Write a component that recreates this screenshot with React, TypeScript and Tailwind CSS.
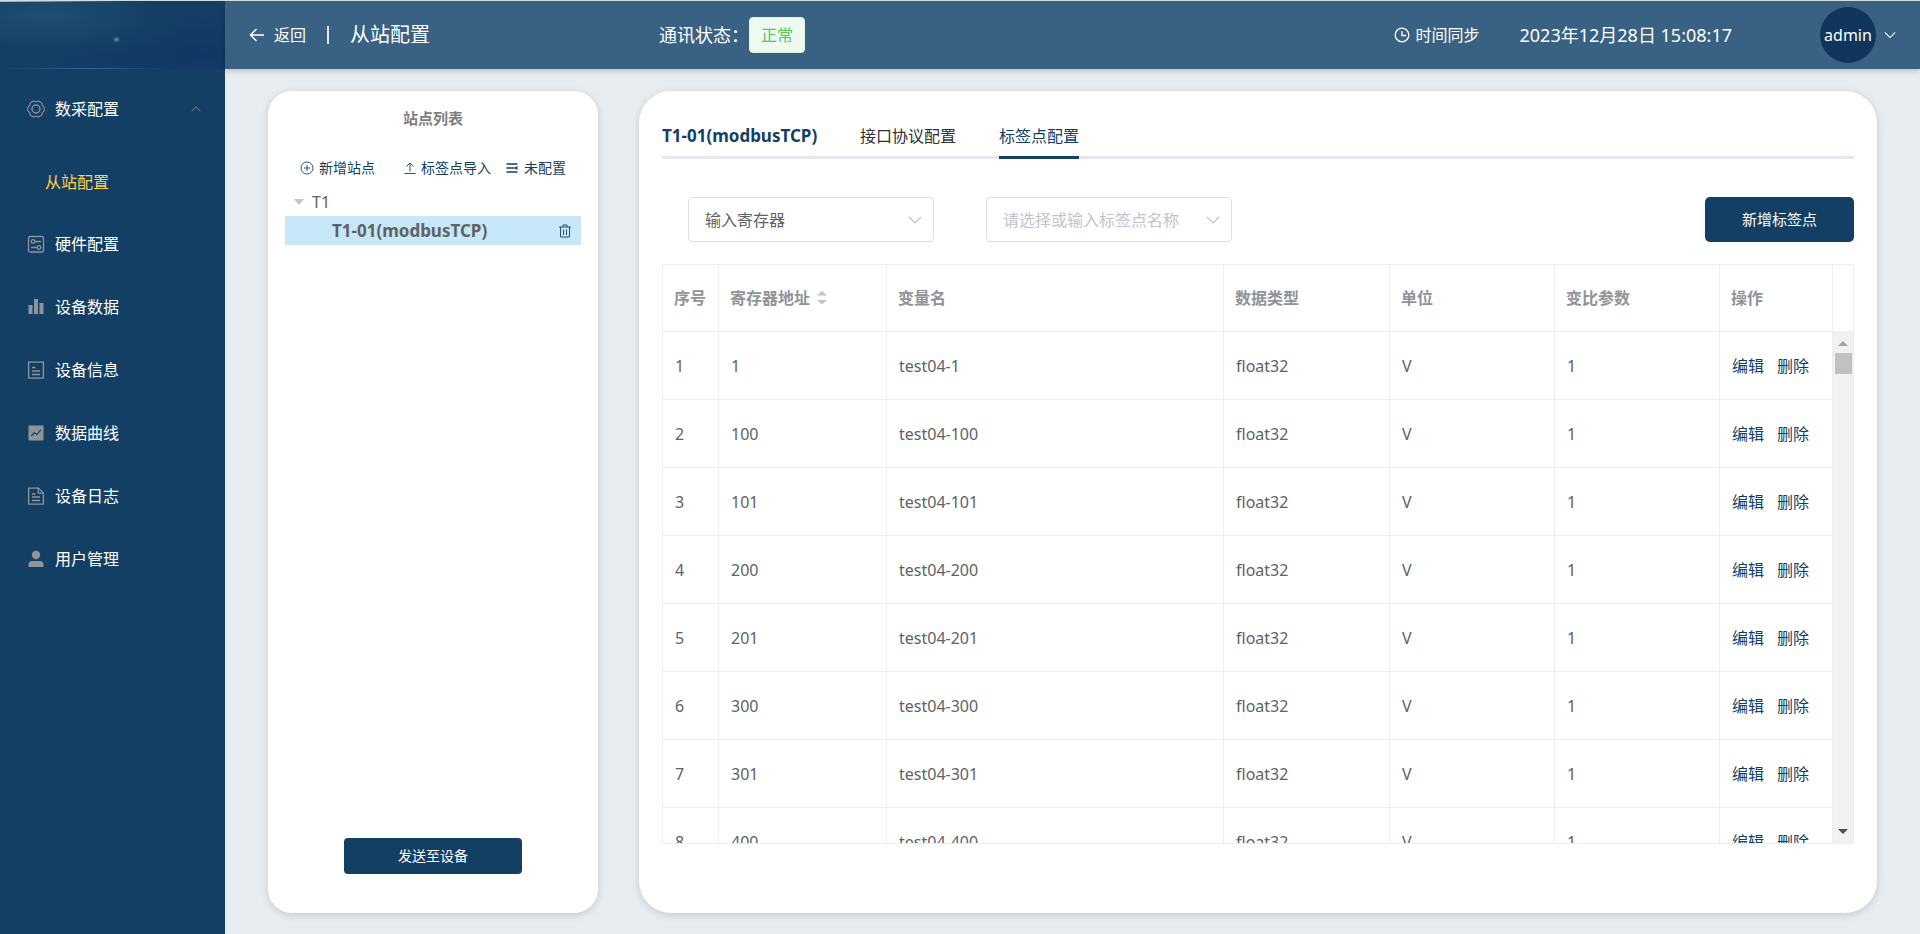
import { useState } from "react";
import type { ReactNode } from "react";

const menu = [
  { name: "硬件配置", icon: "hardware" },
  { name: "设备数据", icon: "bars" },
  { name: "设备信息", icon: "tickets" },
  { name: "数据曲线", icon: "curve" },
  { name: "设备日志", icon: "log" },
  { name: "用户管理", icon: "user" },
];

const rows = [1, 100, 101, 200, 201, 300, 301, 400].map((address, i) => ({
  no: i + 1,
  address,
  name: `test04-${address}`,
  type: "float32",
  unit: "V",
  ratio: 1,
}));

const glyphs: Record<string, ReactNode> = {
  gear: (
    <g fill="none" stroke="currentColor" strokeWidth="1.1" strokeLinejoin="round">
      <path d="M17.2 10.9L15.2 12.6 14.7 15.1 11.5 17 9 16.2 6.5 17 3.3 15.1 2.8 12.6.8 10.9V7.1L2.8 5.4 3.3 2.9 6.5 1 9 1.8 11.500 1 14.700 2.900 15.200 5.400 17.200 7.100z" />
      <circle cx="9" cy="9" r="4" strokeWidth="1.4" />
    </g>
  ),
  hardware: (
    <g fill="none" stroke="currentColor" strokeWidth="1.3">
      <rect x="1.5" y="1.5" width="15" height="15.500" rx="1.500" />
      <circle cx="6" cy="6.500" r="1.800" />
      <path d="M7.800 6.500H14M4 12.500h6.200" />
      <circle cx="12" cy="12.500" r="1.800" />
    </g>
  ),
  bars: (
    <g fill="currentColor">
      <rect x="1.5" y="7" width="4" height="9" />
      <rect x="7" y="1" width="4" height="15" />
      <rect x="12.5" y="5" width="4" height="11" />
    </g>
  ),
  tickets: (
    <g fill="none" stroke="currentColor" strokeWidth="1.3">
      <rect x="1.6" y="1.1" width="14.8" height="16" />
      <path d="M5 6.500h3.500M5 10h8M5 13.500h8" />
    </g>
  ),
  curve: (
    <g>
      <rect x="1.5" y="1.5" width="15" height="15" fill="currentColor" />
      <path d="M4.300 12l3-3.200 2.600 1.700 4-4.800" fill="none" stroke="#143f65" strokeWidth="1.1" />
    </g>
  ),
  log: (
    <g fill="none" stroke="currentColor" strokeWidth="1.3">
      <path d="M1.600 1.100h10l4.800 4.800v11.200H1.600z" />
      <path d="M11.300 1.100v5h5M5 7h3.500M5 10h8M5 13.500h8" />
    </g>
  ),
  user: (
    <g fill="currentColor">
      <circle cx="9" cy="5" r="4.2" />
      <path d="M1.500 17v-2.500a3.500 3.500 0 0 1 3.500-3.500h8a3.500 3.500 0 0 1 3.500 3.500V17z" />
    </g>
  ),
};

function MenuIcon({ name }: { name: string }) {
  return (
    <svg viewBox="0 0 18 18" className="size-[18px] shrink-0 text-[#909399]" aria-hidden>
      {glyphs[name]}
    </svg>
  );
}

function Chevron({ className }: { className: string }) {
  return (
    <svg viewBox="0 0 14 8" className={className} fill="none" stroke="currentColor" strokeWidth="1.2" aria-hidden>
      <path d="M1 1l6 6 6-6" />
    </svg>
  );
}

function Sidebar() {
  return (
    <aside className="w-[225px] shrink-0 bg-[#143f65] text-base text-white">
      <div className="flex h-[77px] flex-col">
        <div className="h-px bg-[#d6dcd8]" />
        <div className="h-px bg-linear-to-r from-[#a9c4cc] to-[#143f65] to-55%" />
        <div className="relative h-[66px] bg-[radial-gradient(ellipse_at_20%_20%,#1e4f70,#143f65_45%,transparent_60%),radial-gradient(ellipse_at_90%_80%,#0f3763,#143f65_60%)]">
          <span className="absolute left-[114px] top-[36px] h-[3px] w-[5px] rounded-full bg-[#6f9dbf] blur-[1px]" />
        </div>
        <div className="h-px bg-linear-to-r from-[#143f65] via-[#2f6a96] via-40% to-[#123a64] to-75%" />
      </div>
      <nav aria-label="主菜单">
        <button type="button" aria-expanded="true" className="flex h-[63px] w-full items-center pl-[27px] pr-6">
          <MenuIcon name="gear" />
          <span className="ml-[10px]">数采配置</span>
          <Chevron className="ml-auto h-[6px] w-[10px] rotate-180 text-[#909399]" />
        </button>
        <div className="pt-3">
          <a href="#station" aria-current="page" className="flex h-[60px] items-center pl-[45px] text-[#ffd04b]">
            从站配置
          </a>
        </div>
        {menu.map((item) => (
          <a key={item.name} href={`#${item.icon}`} className="flex h-[63px] items-center gap-[10px] pl-[27px]">
            <MenuIcon name={item.icon} />
            {item.name}
          </a>
        ))}
      </nav>
    </aside>
  );
}

function Header() {
  return (
    <header className="relative flex h-[69px] shrink-0 items-center border-t border-[#d6dcd8] bg-[#386184] pl-6 pr-6 text-base text-white shadow-[0_2px_6px_rgba(0,0,0,0.2)]">
      <button type="button" className="flex items-center gap-[9px]">
        <svg viewBox="0 0 16 16" className="size-4" fill="none" stroke="currentColor" strokeWidth="1.5" aria-hidden>
          <path d="M7.500 2L1.500 8l6 6M1.500 8H15" />
        </svg>
        返回
      </button>
      <span className="ml-[21px] h-[18px] w-[2px] bg-[#dfe6ec]" />
      <h1 className="ml-[21px] text-xl">从站配置</h1>
      <div className="ml-[229px] flex items-center text-lg">
        通讯状态：
        <span className="flex h-9 w-14 items-center justify-center rounded border border-[#e1f3d8] bg-[#eef9f0] text-base text-[#4ccb5f]">
          正常
        </span>
      </div>
      <button type="button" className="ml-auto flex items-center gap-[6px]">
        <svg viewBox="0 0 16 16" className="size-4" fill="none" stroke="currentColor" strokeWidth="1.3" aria-hidden>
          <circle cx="8" cy="8" r="6.8" />
          <path d="M8 4v4.500h4" />
        </svg>
        时间同步
      </button>
      <time className="ml-10 text-lg">2023年12月28日 15:08:17</time>
      <button type="button" className="ml-[88px] flex items-center gap-2">
        <span className="flex size-14 items-center justify-center rounded-full bg-[#11365d]">admin</span>
        <Chevron className="h-2 w-3" />
      </button>
    </header>
  );
}

function StationPanel() {
  return (
    <section className="flex w-[330px] shrink-0 flex-col items-center rounded-3xl bg-white px-[17px] shadow-[0_2px_8px_rgba(0,0,0,0.15)]">
      <h2 className="mt-4 text-[15px] leading-[22px] font-bold text-[#7f7f7f]">站点列表</h2>
      <div className="mt-7 flex h-[22px] w-full items-center pl-[15px] text-sm text-[#143f65]">
        <button type="button" className="flex items-center gap-[5px]">
          <svg viewBox="0 0 14 14" className="size-[14px]" fill="none" stroke="currentColor" strokeWidth="0.9" aria-hidden>
            <circle cx="7" cy="7" r="6" />
            <path d="M7 4v6M4 7h6" />
          </svg>
          新增站点
        </button>
        <button type="button" className="ml-7 flex items-center gap-1">
          <svg viewBox="0 0 14 14" className="size-[14px]" fill="none" stroke="currentColor" strokeWidth="0.9" aria-hidden>
            <path d="M7 10.500V2M3.500 5.500L7 2l3.500 3.500M1.500 12.500h11" />
          </svg>
          标签点导入
        </button>
        <button type="button" className="ml-[14px] flex items-center gap-[5px]">
          <svg viewBox="0 0 14 14" className="size-[14px]" fill="none" stroke="currentColor" strokeWidth="1.4" aria-hidden>
            <path d="M1.500 3h11M1.500 7h8M1.500 11h11" />
            <path d="M12.500 5v4L9 7z" fill="currentColor" stroke="none" />
          </svg>
          未配置
        </button>
      </div>
      <ul role="tree" className="mt-2 w-full text-base text-[#606266]">
        <li role="treeitem" aria-expanded="true" aria-selected="false">
          <div className="flex h-[29px] items-center gap-2 pl-[9px]">
            <svg viewBox="0 0 10 6" className="h-[6px] w-[10px] text-[#c0c4cc]" aria-hidden>
              <path d="M0 0h10L5 6z" fill="currentColor" />
            </svg>
            T1
          </div>
          <ul role="group">
            <li
              role="treeitem"
              aria-selected="true"
              className="flex h-[29px] items-center justify-between bg-[#c6e8f8] pl-[47px] pr-[9px] text-[17px] font-bold"
            >
              T1-01(modbusTCP)
              <button type="button" aria-label="删除站点" className="text-[#143f65]">
                <svg viewBox="0 0 14 14" className="size-[14px]" fill="none" stroke="currentColor" strokeWidth="0.9" aria-hidden>
                  <path d="M1 3h12M5 3V1h4v2M2.500 3v10h9V3M5.500 5.500V11M8.500 5.500V11" />
                </svg>
              </button>
            </li>
          </ul>
        </li>
      </ul>
      <button type="button" className="mt-auto mb-[39px] h-9 w-[178px] rounded bg-[#143f65] text-sm text-white">
        发送至设备
      </button>
    </section>
  );
}

function Filters() {
  const [point, setPoint] = useState("");

  return (
    <div className="mt-[38px] flex items-center pl-[26px]">
      <div className="relative">
        <select
          aria-label="寄存器类型"
          className="h-[45px] w-[246px] appearance-none rounded border border-[#dcdfe6] bg-white px-4 text-base text-[#606266]"
        >
          <option>输入寄存器</option>
          <option>保持寄存器</option>
        </select>
        <Chevron className="pointer-events-none absolute right-3 top-[19px] h-2 w-[14px] text-[#c0c4cc]" />
      </div>
      <div className="relative ml-[52px]">
        <input
          aria-label="标签点名称"
          value={point}
          onChange={(e) => setPoint(e.target.value)}
          placeholder="请选择或输入标签点名称"
          className="h-[45px] w-[246px] rounded border border-[#dcdfe6] bg-white px-4 text-base text-[#606266] placeholder:text-[#c0c4cc]"
        />
        <Chevron className="pointer-events-none absolute right-3 top-[19px] h-2 w-[14px] text-[#c0c4cc]" />
      </div>
      <button type="button" className="ml-auto h-[45px] w-[149px] rounded-[5px] bg-[#143f65] text-[15px] text-white">
        新增标签点
      </button>
    </div>
  );
}

function Scrollbar() {
  return (
    <div className="flex w-[21px] shrink-0 flex-col border-l border-[#ebeef5]" aria-hidden>
      <div className="h-[67px] border-b border-[#ebeef5]" />
      <div className="flex flex-1 flex-col items-center bg-[#f1f1f1] pb-[9px] pt-[9px]">
        <svg viewBox="0 0 10 5" className="h-[5px] w-[10px]">
          <path d="M0 5h10L5 0z" fill="#a3a3a3" />
        </svg>
        <div className="mt-[7px] h-[21px] w-[17px] bg-[#c1c1c1]" />
        <svg viewBox="0 0 10 5" className="mt-auto h-[5px] w-[10px]">
          <path d="M0 0h10L5 5z" fill="#505050" />
        </svg>
      </div>
    </div>
  );
}

function TagTable() {
  return (
    <div className="mt-[22px] flex h-[580px] overflow-hidden border border-[#ebeef5]">
      <div className="min-w-0 flex-1 overflow-hidden">
        <table className="w-full table-fixed border-separate border-spacing-0 text-left text-base text-[#606266] [&_td]:border-b [&_td]:border-r [&_td]:border-[#ebeef5] [&_td]:pl-3 [&_td:last-child]:border-r-0 [&_th]:border-b [&_th]:border-r [&_th]:border-[#ebeef5] [&_th]:pl-[11px] [&_th:last-child]:border-r-0">
          <colgroup>
            <col className="w-14" />
            <col className="w-[168px]" />
            <col />
            <col className="w-[166px]" />
            <col className="w-[165px]" />
            <col className="w-[165px]" />
            <col className="w-[112px]" />
          </colgroup>
          <thead className="text-[#909399]">
            <tr className="h-[67px]">
              <th>序号</th>
              <th>
                <button type="button" className="flex items-center gap-[7px] font-bold">
                  寄存器地址
                  <svg viewBox="0 0 10 16" className="h-4 w-[10px] text-[#c0c4cc]" fill="currentColor" aria-hidden>
                    <path d="M0 5.500h10L5 1zM0 10h10L5 14.500z" />
                  </svg>
                </button>
              </th>
              <th>变量名</th>
              <th>数据类型</th>
              <th>单位</th>
              <th>变比参数</th>
              <th>操作</th>
            </tr>
          </thead>
          <tbody>
            {rows.map((row) => (
              <tr key={row.no} className="h-[68px]">
                <td>{row.no}</td>
                <td>{row.address}</td>
                <td>{row.name}</td>
                <td>{row.type}</td>
                <td>{row.unit}</td>
                <td>{row.ratio}</td>
                <td>
                  <div className="flex gap-[13px] text-[#143f65]">
                    <button type="button">编辑</button>
                    <button type="button">删除</button>
                  </div>
                </td>
              </tr>
            ))}
          </tbody>
        </table>
      </div>
      <Scrollbar />
    </div>
  );
}

function ConfigPanel() {
  return (
    <section className="min-w-0 flex-1 rounded-[32px] bg-white pl-[23px] pr-[23px] pt-[30px] shadow-[0_2px_8px_rgba(0,0,0,0.15)]">
      <div role="tablist" className="flex h-[38px] border-b-[3px] border-[#e4e7ed] text-base text-[#303133]">
        <h2 className="w-[198px] pt-[3px] text-[17px] leading-6 font-bold text-[#143f65]">T1-01(modbusTCP)</h2>
        <button type="button" role="tab" aria-selected="false" className="mr-[43px] -mb-[3px] border-b-[3px] border-transparent pb-[5px]">
          接口协议配置
        </button>
        <button
          type="button"
          role="tab"
          aria-selected="true"
          className="-mb-[3px] border-b-[3px] border-[#143f65] pb-[5px] text-[#143f65]"
        >
          标签点配置
        </button>
      </div>
      <Filters />
      <TagTable />
    </section>
  );
}

export default function App() {
  return (
    <div className="flex min-h-screen bg-[#e7edf1] font-['Noto_Sans','Noto_Sans_CJK_SC',sans-serif]">
      <Sidebar />
      <div className="flex min-w-0 flex-1 flex-col">
        <Header />
        <main className="flex flex-1 gap-[41px] pb-[21px] pl-[43px] pr-[43px] pt-[22px]">
          <StationPanel />
          <ConfigPanel />
        </main>
      </div>
    </div>
  );
}
